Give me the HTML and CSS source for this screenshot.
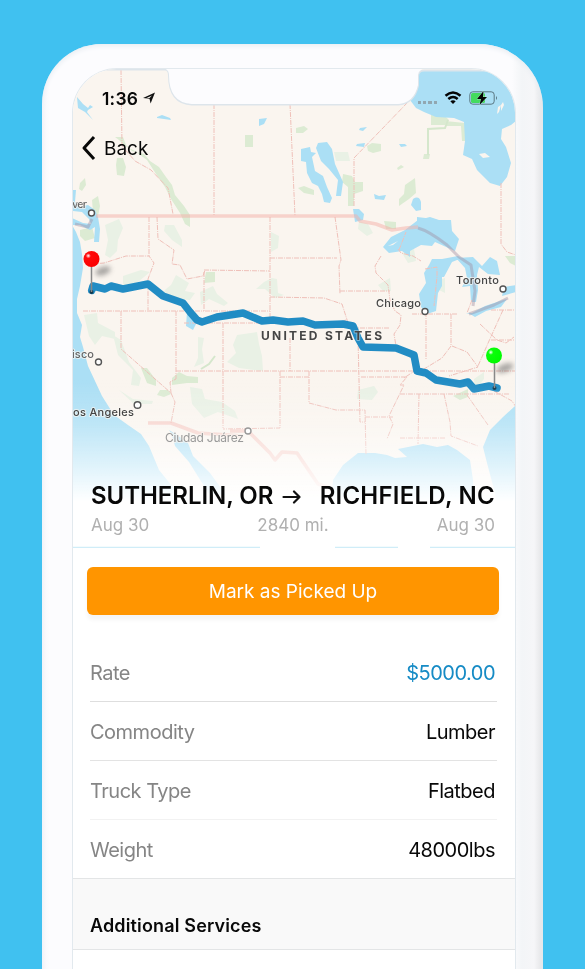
FILE: index.html
```
<!DOCTYPE html>
<html lang="en">
<head>
<meta charset="utf-8">
<title>Load details</title>
<link rel="stylesheet" href="styles.css">
</head>
<body>
<main class="phone">
<div class="screen">
<section class="hero">
<svg class="map" viewBox="72 69 444 479">
<defs>
<linearGradient id="fade" x1="0" y1="0" x2="0" y2="1"><stop offset="0" stop-color="#fff" stop-opacity="0"/><stop offset=".35" stop-color="#fff" stop-opacity=".22"/><stop offset=".7" stop-color="#fff" stop-opacity=".62"/><stop offset="1" stop-color="#fff"/></linearGradient>
<radialGradient id="red" cx=".3" cy=".3" r=".8"><stop offset="0" stop-color="#fff"/><stop offset=".2" stop-color="#ff0a0a"/><stop offset="1" stop-color="#fa0000"/></radialGradient>
<radialGradient id="green" cx=".3" cy=".3" r=".8"><stop offset="0" stop-color="#fff"/><stop offset=".2" stop-color="#0aff0a"/><stop offset="1" stop-color="#00fa00"/></radialGradient>
<filter id="soft" x="-50%" y="-50%" width="200%" height="200%"><feGaussianBlur stdDeviation="2.4"/></filter>
</defs>
<rect x="72" y="69" width="444" height="479" fill="#faf5ef"/>
<g class="forest">
<path d="M115 137l8 0 3 8 6 6 12 3 6 7 9 6 7 10 6 8 3 10 9 11 6 9 0 12-5-3-5-11-9-14-6-12-9-13-9-14-12-9-10-5-6-6zM117 158l6 0 3 9-2 9-7-1-1-10zM80 183l5-5 1 7-4 6-3-2zM92 200l6-4 2 10-2 10-5-4zM80 230l12-3 3 11-10 3-5-5zM245 135l8 0 0 12-8 0zM296 128l8-2 4 3-5 4-7 0zM298 188l6-2 10 4 0 5-10-2zM343 174l9 2 3 6 8 0 0 9-9 3 0 12-6 0 0-19-6-5zM367 146l5-3 9 1 0 7-8 2-5-2zM424 154l6 0-1 5-6 0zM431 111l12 3 6 6-4 5-14 0zM445 121l30 3 1 17-14 0-1-15-15 0zM397 168l4-3 3 2-6 3zM405 185l10-7 1 15-7 6-10 7 0-7 5-5zM206 272l9 0 0 10-11 1zM141 368l6 0 9 12 0 6-9-3zM172 378l7-6 8 4 11 1 0 6-11 0-15 2zM160 390l8 0 3 4-7 3-7-2zM453 396l15-7 0 8-8 3zM505 256l11 0 0 10-6-3zM384 221l12 1 0 7-10 0z"/>
<path class="pale" d="M334 152l14 0 2 9-14 0zM105 225l14-6 4 9-5 12-1 11-7 7-5-3 3-15zM165 225l9 0 8 15 0 7-10-7-8-9zM176 275l13 8-4 8 10 2-5 7-14-1-16-4 6-6 5-4zM123 276l18-6 9 2-12 10-15 5zM84 315l13-2 1 10 17 9 0 7-13-3-7 9-6-9zM200 292l13-6 4 8 11 9-4 3-15-7-8 6zM271 232l8 4-1 12-7 4zM272 278l5 1 1 14 6 2-9 3-10-9-9 0 8-7zM237 335l20-3 2 12 3 12 1 15-24-3-12-6 9-9-3-8zM198 337l6 1-2 11 2 14-10 4 4-9zM113 335l8 5 8 22 12 16-2 8-8-1 2-15-15-15zM190 387l12 2 3 10 17 3 13 9 3 8-20-7-14 6-12-14zM358 390l16-4 4 6-6 8-15-1zM359 221l9 3 5 9-6 3-9-7zM402 253l12-4 2 12-8 2zM378 285l12-7 1 13-8 0zM439 280l6-2 0 15-8-4zM474 379l10-7 0 7-9 11zM119 390l14 9 20 2-1 3-18 0z"/>
<path class="trail" d="M448 120l-3 8-17 1 0 26M201 369l8-5 6-8"/>
</g>
<g class="water">
<path d="M72 190l4 0-1 12 4 5 9-2 7 5 3 7 2 12-1 13-5 0 1-15-5 3-4-2-6-3-8 0 4 7 4 10 2 12 1 14-3 18-3 13 0 14 5 12-2 12 3 10 5 19 14 30 12 19 14 10 13 9 8 12 10 24 17 21-5 9 20 15 0 60-119 0z"/>
<path d="M169 430l8 5 11 8 5 13 17 17 16 22-17-1-20-32-14-16-3-11zM333 480l10-15 15-12 17 0 12 2 8 3 12-1-9-8 25-5 14 3 11-2 9 5 13 10 3 20 4 68-150 0zM516 405l-13 12-13 13-7 17 4 16 8 30 10 55 11 0z"/>
<path d="M419 71h97v50l-5 4-9 4-1 10 5 8 5 16-4 14-7 9-10-3-13-13-5-11-9-4 2-14-1-19-10-4-18-1-12-5-8-4-6-8-7-8-3-4 6-8zM77 97l6 7 5 4 2-3 3 2-5 3-1 2 6 8-8-8-7-4zM157 117l5-2 8 3 1 2-14-2zM259 119l8-1-3 6-5 2zM301 149l9-2 1 5 5 1-4 4 3 14 8 5 4 11 5 11-2 5-6-1-2-8-4-8-6-3-5-10-1-11-5-1zM318 143l9-1 5 7 3 15 8 18-2 14-5 0 2-16-9-11-8-8-5-13zM360 128l7-1-4 4-4-1zM357 144l8-1-1 4-8-1zM399 144l6 0 2 2-6 1zM374 194l5 2 7-1-2 5-9-1zM413 199q6-4 8 3l0 8-5 1-5-6zM353 209l6 0 5 5-1 6-8 2zM417 217l17 2 6 2-23 0z"/>
<path d="M383 247l8-10 14-7 13-10 12-3 9 3 12 0 1 11 7 8-4 12-20-9-3 4-11-1-11 6 0 6-8-6-13 2zM442 259l16-3 4 2-10 4-8 15-2 0 0 9-4 7-2 18-9 3-6-7-2-13 7-11-2-10 5-8 3-6zM456 258l17-1 9 9 8-9 7 4 3 14-12-1-9-7-2 8 1 15-2 12-5 0-1-16-8 1 5-9-2-10zM466 313l6 0 13-7 18-6 4-1-6 8-15 4-11 6-5-3zM504 287l12-2 0 7-14 4z"/>
<path d="M187 312l7 2 2 10-3 6-7-4z"/>
</g>
<path fill="#faf5ef" d="M72 211l10 1 7 7 2 5-8-1-11-5zM479 154l6-1 5 4-7 1zM501 105l2-3 1 3-3 6zM498 107l3-2-2 7-2 2zM388 246l10-5-5 4z"/>
<g class="state">
<path d="M121 70l1 76 13 15 16 9 17 18 5 26M214 104v112M290 104l5 112M354 206v-48l54-56M501 183v61l6 8 9 3M92 264l12-1 22-7 23 0 5 7-6 16 0 31M149 217v39M157 217l1 22 16 11-2 14 8 1 7 14 16-3 2-6M204 270l66 1M204 272l0 39 66 0M270 217v105M83 311h121M121 311v38l50 44-1-11 6-3M176 311v68M171 393l4 9-4 21M176 371h340M223 323v105M184 323h152l10-3M290 338v33M280 371v57l-57 1M270 258h67M335 217l6 43-2 6 1 28M340 291h50M270 297l54 1 18 6 7 22 9 14M309 371v32l27 7 29 0 1 45M280 377h29M358 338l2 84 5 0M365 417h28M361 377h46l-7 8 4 0-15 31 4 8-6 15M400 394h110M419 394l-1 50M444 394l6 28 1 14 27 10M400 438h46M467 395l21 30M494 391l18 10 4 6M398 249l3 4 12 3 8 5M381 256l-6 10 1 7 12 12 2 15 5 11 6 4-1 10-6 9 2 12 20 16 0 8-12 8M352 328h38M412 314h46M426 312v47M451 314v32l-9 12-18 11M452 346l15 6 11 15-29 9M503 310l-14 31-11 25M491 310h25M491 340h25M480 324l17 16 9 3 8-6M399 250l7-18M425 269l12-2 0 10-3 29M472 300l-5 13"/>
</g>
<g class="border"><path d="M96 216h260l4 5 16 3 16 6 14-2 12-1"/><path class="lake" d="M75 224l13 3 4-8M418 228q11 3 29 17l12 12 12 8 4 26-2 15M469 314l25-9 14-7"/><path d="M148 423h23l27 10 45 3M230 431h18l22 22 5 7 7-8 15 1 21 31 10 3"/></g>
<path class="route" d="M91.700 290.500L93 286l12 3 6-3 12 3 25-5 15 12 20 7 7 9 7 8 5 2 15-5 26-4 19 8 11-1 15 2 15-1 12 4 28-1 10 2 5 12 5 9 33 1 18 7 3 16 9 2 10 7 24 4 8-2 6 7 15-3 8 2"/>
<g class="shadow"><ellipse cx="103" cy="271" rx="8" ry="4" transform="rotate(-20 103 271)"/><ellipse cx="505" cy="368" rx="9" ry="4" transform="rotate(-20 505 368)"/></g>
<circle cx="91.500" cy="292" r="2" fill="#12384b"/><circle cx="494.500" cy="388" r="2" fill="#12384b"/>
<path class="needle" d="M91.500 266v26M494.500 363v25"/>
<circle cx="91.500" cy="259" r="8" fill="url(#red)"/><circle cx="494" cy="355.500" r="8" fill="url(#green)"/>
<rect x="72" y="380" width="444" height="122" fill="url(#fade)"/><rect x="72" y="501" width="444" height="47" fill="#fff"/>
<g class="labels">
<text class="place" x="72" y="208" textLength="15">ver</text>
<text class="place" x="72" y="358" textLength="22">isco</text>
<text class="place dark" x="73" y="416" textLength="61">os Angeles</text>
<text class="place faded" x="165" y="442" textLength="79">Ciudad Juárez</text>
<text class="place dark" x="376" y="307" textLength="45">Chicago</text>
<text class="place dark" x="456" y="284" textLength="43">Toronto</text>
<text class="country" x="261" y="339.500" textLength="121">UNITED STATES</text>
</g>
<g class="city"><circle cx="91.500" cy="213" r="3"/><circle cx="98.500" cy="362" r="3"/><circle cx="137.500" cy="405" r="3.300"/><circle cx="248" cy="431" r="3" stroke="#999"/><circle cx="425" cy="311.500" r="3"/><circle cx="503" cy="289" r="3"/></g>
<path d="M72 547.500h188M335 547.500h63M430 547.500h86" stroke="#d0edf8" stroke-width="1.500"/>
<path class="notch" d="M72 69.500h93q4 0 4 6 0 28 23 29h206q16-1 20-19v-9q0-6 6-6h92"/>
<path fill="#fcfcfe" d="M164 68q5 2 5 7 0 28 23 29h206q16-1 20-19v-10q1-5 6-7z"/>
</svg>
<div class="overlay">
<div class="status">
<span class="time">1:36</span>
<svg class="loc" viewBox="0 0 14 12"><path d="M1 6L13 .5 8.600 11.500 7.500 6.800z"/><path d="M4 6.200L10 3.500 7.500 6z" class="gap"/></svg>
<span class="signal"><i></i><i></i><i></i><i></i></span>
<svg class="wifi" viewBox="0 0 18 14"><path d="M1.500 4.700Q9-1.700 16.500 4.700M4.300 8Q9 4 13.700 8"/><path d="M6.300 10.300Q9 8 11.700 10.300L9 13z" class="dot"/></svg>
<svg class="battery" viewBox="0 0 30 14"><rect x="2" y="2" width="14" height="10" rx="1.500" fill="#44db5e"/><rect x=".8" y=".8" width="24.400" height="12.400" rx="3"/><path d="M27 5q2 2 0 4z" class="tip"/><path d="M14.500 0L8 8h4L10.500 14 18 6h-4z" class="bolt"/></svg>
</div>
<div class="back"><svg viewBox="0 0 15 26"><path d="M13 2L3 13 13 24"/></svg><span>Back</span></div>
<div class="trip">
<div class="cities"><strong class="from">SUTHERLIN, OR</strong><svg viewBox="0 0 20 14"><path d="M1.500 7h16M12 1.500L17.500 7l-5.500 5.500"/></svg><strong class="to">RICHFIELD, NC</strong></div>
<div class="dates"><span>Aug 30</span><span class="miles">2840 mi.</span><span>Aug 30</span></div>
</div>
</div>
</section>
<button class="action">Mark as Picked Up</button>
<dl class="details">
<div class="row strong"><dt>Rate</dt><dd class="price">$5000.00</dd></div>
<div class="row"><dt>Commodity</dt><dd>Lumber</dd></div>
<div class="row faint"><dt>Truck Type</dt><dd>Flatbed</dd></div>
<div class="row last"><dt>Weight</dt><dd>48000lbs</dd></div>
</dl>
<h2 class="section">Additional Services</h2>
</div>
</main>
</body>
</html>
```
FILE: styles.css
```
* { box-sizing: border-box; }
body { margin: 0; height: 969px; overflow: hidden; background: #40c1f0; font-family: Inter, "Liberation Sans", sans-serif; color: #080808; }
.phone { width: 501px; height: 940px; margin: 44px 0 0 42px; padding: 25px 27px 0 31px; border-radius: 60px 64px 0 0; background: linear-gradient(90deg, #f6f7fb 0, #fcfcfe 8px, #fcfcfe 470px, #f3f5f7 480px, #f6f6f8 492px, #e2e3e5 501px); box-shadow: inset 0 2px 5px #e8edf2; }
.screen { width: 442px; height: 920px; overflow: hidden; border-radius: 44px 44px 0 0; background: #fff; box-shadow: 0 0 0 1px #e2e9ee; }
.hero { display: grid; height: 479px; margin-left: -1px; }
.map, .overlay { grid-area: 1 / 1; width: 444px; height: 479px; }
.forest { fill: #dcebd3; }
.pale { fill: #e9f1e5; }
.trail { fill: none; stroke: #d5e7cc; stroke-width: 2; }
.water { fill: #abdff5; }
.state { fill: none; stroke: #efc0b9; stroke-width: 1; stroke-dasharray: 5 1 1 1; }
.border { fill: none; stroke: #f3b0a8; stroke-opacity: .5; stroke-width: 3.500; stroke-linejoin: round; }
.lake { stroke: #a08ca0; stroke-width: 3; stroke-opacity: .42; }
.route { fill: none; stroke: #218cc4; stroke-width: 7.500; stroke-linecap: round; stroke-linejoin: round; }
.labels { font-family: Inter, sans-serif; paint-order: stroke; stroke: #faf7f2; stroke-width: 2px; stroke-opacity: .7; stroke-linejoin: round; }
.place { font-size: 11px; fill: #666; font-weight: 500; }
.dark { fill: #444; }
.faded { fill: #999; font-weight: 400; font-size: 12px; }
.country { font-size: 12px; font-weight: 700; fill: #454545; stroke-opacity: .4; }
.city { fill: #fff; stroke: #555; stroke-width: 1.400; }
.shadow { fill: #555; opacity: .5; filter: url(#soft); }
.needle { stroke: #888; stroke-width: 1.500; }
.notch { fill: none; stroke: #dde5eb; stroke-width: 2; }
.overlay { display: flex; flex-direction: column; }
.status { display: flex; align-items: center; height: 24px; margin: 17px 19px 0 30px; }
.time { font-size: 17.500px; font-weight: 600; letter-spacing: .2px; width: 40px; }
.loc { width: 14px; height: 12px; }
.loc path { fill: #111; }
.loc .gap { fill: #faf5ef; }
.signal { display: flex; gap: 2px; margin: 8px 7px 0 auto; }
.signal i { width: 3.300px; height: 3px; background: #91a7b1; }
.wifi { width: 18px; height: 14px; margin-right: 7px; }
.wifi path { fill: none; stroke: #050505; stroke-width: 2.500; }
.wifi .dot { fill: #050505; stroke: none; }
.battery { width: 30px; height: 14px; margin-right: -2px; }
.battery rect:nth-of-type(2) { fill: none; stroke: #5a7782; stroke-width: 1; }
.battery .tip { fill: #5a7782; }
.battery .bolt { fill: #050505; stroke: #b8eada; stroke-width: .8; paint-order: stroke; }
.back { display: flex; align-items: center; height: 30px; margin: 23px 0 0 9px; gap: 8px; font-size: 19px; letter-spacing: 0; }
.back svg { width: 15px; height: 26px; }
.back path { fill: none; stroke: #080808; stroke-width: 3; stroke-linejoin: round; }
.trip { margin: auto 21px 11px 19px; }
.cities { display: flex; align-items: center; height: 30px; margin-bottom: 2px; }
.cities strong { font-size: 24px; line-height: 30px; font-weight: 600; white-space: nowrap; }
.cities svg { width: 20px; height: 14px; margin: 1px 0 0 9px; }
.cities path { fill: none; stroke: #111; stroke-width: 2.200; stroke-linecap: round; stroke-linejoin: round; }
.cities .from { letter-spacing: -.05px; }
.cities .to { margin-left: auto; letter-spacing: .25px; }
.dates { display: flex; justify-content: space-between; color: #b0b0b0; font-size: 17px; line-height: 24px; }
.action { display: block; width: 412px; height: 48px; margin: 19px 0 0 14px; padding: 1px 0 0; border: 0; border-radius: 6px; background: #ff9500; color: #fff; font: 400 19px/47px Inter, sans-serif; box-shadow: 0 5px 4px #f5f5f5; }
.details { margin: 28px 18px 0 17px; }
.row { display: flex; align-items: center; justify-content: space-between; height: 59px; padding: 2px 2px 0 0; border-bottom: 1px solid #e3e3e3; font-size: 20px; letter-spacing: -.5px; }
.row.strong { border-bottom-color: #dedede; }
.row.faint { border-bottom-color: #f2f2f2; }
.row.last { height: 58px; border: 0; }
.row dt { color: #858585; }
.row dd { margin: 0; }
.row .price { color: #168bc5; }
.section { height: 72px; margin: 0; padding: 24px 17px 0; border: solid #e3e5e6; border-width: 1px 0; background: #f9f9f9; font-size: 18px; line-height: 46px; font-weight: 600; letter-spacing: .15px; }
```
